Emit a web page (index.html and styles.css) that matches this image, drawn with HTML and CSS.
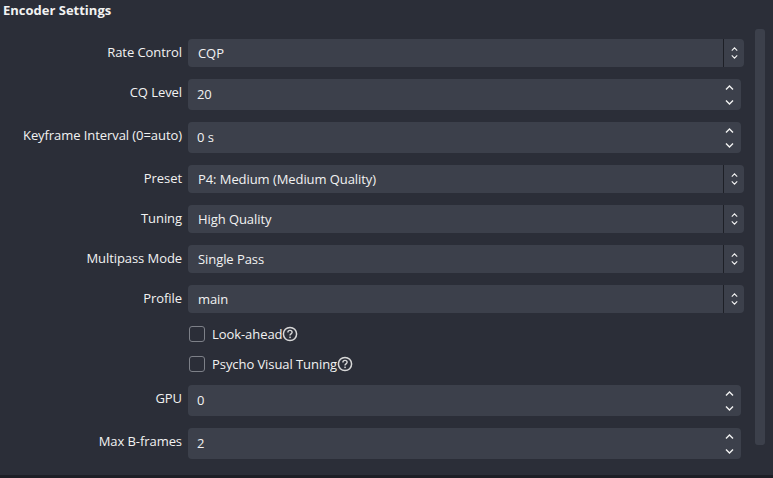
FILE: index.html
```html
<!DOCTYPE html>
<html lang="en">
<head>
<meta charset="utf-8">
<title>Encoder Settings</title>
<link rel="stylesheet" href="styles.css">
</head>
<body>
<svg class="defs" width="0" height="0" aria-hidden="true">
  <symbol id="up-s" viewBox="0 0 9 5"><path d="M1 4.5 4.5 1 8 4.5" fill="none" stroke="currentColor" stroke-width="1.4"/></symbol>
  <symbol id="down-s" viewBox="0 0 9 5"><path d="M1 .5 4.5 4 8 .5" fill="none" stroke="currentColor" stroke-width="1.4"/></symbol>
  <symbol id="help" viewBox="0 0 16 16"><circle cx="8" cy="8" r="6.6" fill="none" stroke="currentColor" stroke-width="1.5"/><path d="M5.9 6.4c0-1.3 1-2 2.1-2s2.1.8 2.1 1.9c0 1.6-2.1 1.5-2.1 3.2" fill="none" stroke="currentColor" stroke-width="1.4"/><rect x="7.3" y="10.6" width="1.5" height="1.5" fill="currentColor"/></symbol>
</svg>
<main class="panel">
  <section class="content">
    <h2 class="title">Encoder Settings</h2>
    <div class="form">
      <label class="label">Rate Control</label>
      <div class="field select"><span class="value">CQP</span><span class="drop"><svg class="ic-s"><use href="#up-s"/></svg><svg class="ic-s"><use href="#down-s"/></svg></span></div>

      <label class="label">CQ Level</label>
      <div class="field spin"><span class="value">20</span><span class="arrows"><svg class="ic-l"><use href="#up-s"/></svg><svg class="ic-l"><use href="#down-s"/></svg></span></div>

      <label class="label">Keyframe Interval (0=auto)</label>
      <div class="field spin"><span class="value">0 s</span><span class="arrows"><svg class="ic-l"><use href="#up-s"/></svg><svg class="ic-l"><use href="#down-s"/></svg></span></div>

      <label class="label">Preset</label>
      <div class="field select"><span class="value">P4: Medium (Medium Quality)</span><span class="drop"><svg class="ic-s"><use href="#up-s"/></svg><svg class="ic-s"><use href="#down-s"/></svg></span></div>

      <label class="label">Tuning</label>
      <div class="field select"><span class="value">High Quality</span><span class="drop"><svg class="ic-s"><use href="#up-s"/></svg><svg class="ic-s"><use href="#down-s"/></svg></span></div>

      <label class="label">Multipass Mode</label>
      <div class="field select"><span class="value">Single Pass</span><span class="drop"><svg class="ic-s"><use href="#up-s"/></svg><svg class="ic-s"><use href="#down-s"/></svg></span></div>

      <label class="label">Profile</label>
      <div class="field select"><span class="value">main</span><span class="drop"><svg class="ic-s"><use href="#up-s"/></svg><svg class="ic-s"><use href="#down-s"/></svg></span></div>

      <div class="check"><span class="box"></span><span>Look-ahead</span><svg class="help"><use href="#help"/></svg></div>

      <div class="check"><span class="box"></span><span>Psycho Visual Tuning</span><svg class="help"><use href="#help"/></svg></div>

      <label class="label">GPU</label>
      <div class="field spin"><span class="value">0</span><span class="arrows"><svg class="ic-l"><use href="#up-s"/></svg><svg class="ic-l"><use href="#down-s"/></svg></span></div>

      <label class="label">Max B-frames</label>
      <div class="field spin"><span class="value">2</span><span class="arrows"><svg class="ic-l"><use href="#up-s"/></svg><svg class="ic-l"><use href="#down-s"/></svg></span></div>
    </div>
  </section>
  <div class="scrollbar"><div class="thumb"></div></div>
</main>
<div class="strip"></div>
</body>
</html>
```
FILE: styles.css
```css
* { box-sizing: border-box; }
html, body { margin: 0; height: 100%; }
body {
  width: 773px;
  height: 478px;
  overflow: hidden;
  background: #2b2e38;
  color: #f2f2f2;
  font-family: "Open Sans", "Noto Sans", sans-serif;
  font-size: 13px;
  display: flex;
  flex-direction: column;
}
.defs { position: absolute; }
.panel { flex: 1; display: flex; min-height: 0; }
.content { width: 755px; flex: none; }
.title {
  margin: 0;
  padding: 1px 0 0 3px;
  height: 39px;
  font-size: 13px;
  line-height: 18px;
  font-weight: 700;
}
.form {
  display: grid;
  grid-template-columns: 182px 556px;
  column-gap: 6px;
  row-gap: 12px;
  align-items: start;
  letter-spacing: -0.07px;
}
.label { text-align: right; line-height: 18px; padding-top: 4px; white-space: nowrap; }
.field {
  background: #3c404b;
  border-radius: 4px;
  display: flex;
  align-items: stretch;
  justify-content: space-between;
}
.select { height: 28px; }
.spin { height: 31px; width: 553px; }
.value { line-height: 18px; padding: 5px 0 0 10px; }
.spin .value { padding: 6px 0 0 9px; }
.drop {
  width: 21px;
  border-left: 1px solid #1d1f26;
  display: flex;
  flex-direction: column;
  align-items: center;
  justify-content: center;
  gap: 4px;
  color: #f2f2f2;
}
.arrows {
  width: 18px;
  display: flex;
  flex-direction: column;
  align-items: center;
  justify-content: center;
  gap: 10px;
  color: #f2f2f2;
  margin-right: 3px;
}
.ic-s { width: 7px; height: 4px; display: block; }
.ic-l { width: 9px; height: 5px; display: block; }
.check {
  grid-column: 2;
  height: 18px;
  display: flex;
  align-items: center;
  line-height: 18px;
}
.box {
  width: 16px;
  height: 16px;
  margin: 0 7px 0 1px;
  border: 1px solid #7d8088;
  border-radius: 3px;
  background: #2b2e38;
}
.help { width: 16px; height: 16px; color: #d8d8d8; }
.scrollbar { width: 18px; flex: none; padding-top: 29px; }
.thumb { width: 10px; height: 416px; background: #3c404b; border-radius: 3px; }
.strip { height: 3px; flex: none; background: #1d1f26; }
```
